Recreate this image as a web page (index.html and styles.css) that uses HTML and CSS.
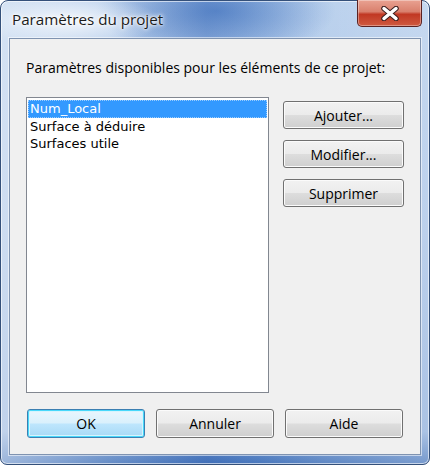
FILE: index.html
```html
<!DOCTYPE html>
<html lang="fr">
<head>
<meta charset="utf-8">
<title>Paramètres du projet</title>
<link rel="stylesheet" href="styles.css">
</head>
<body>
<div class="window">
  <div class="titlebar">
    <span class="title">Paramètres du projet</span>
    <div class="close">
      <svg width="24" height="15" viewBox="0 0 24 15" aria-hidden="true">
        <path d="M6 2.5 L18 12.5 M18 2.5 L6 12.5" stroke="#3a1e1e" stroke-width="5.5" stroke-linecap="round"/>
        <path d="M6 2.5 L18 12.5 M18 2.5 L6 12.5" stroke="#ffffff" stroke-width="3.5" stroke-linecap="round"/>
      </svg>
    </div>
  </div>
  <div class="client">
    <div class="label">Paramètres disponibles pour les éléments de ce projet:</div>
    <div class="main">
      <div class="listbox">
        <div class="item selected">Num_Local</div>
        <div class="item">Surface à déduire</div>
        <div class="item">Surfaces utile</div>
      </div>
      <div class="side">
        <button class="btn">Ajouter...</button>
        <button class="btn">Modifier...</button>
        <button class="btn">Supprimer</button>
      </div>
    </div>
    <div class="footer">
      <button class="btn wide default">OK</button>
      <button class="btn wide">Annuler</button>
      <button class="btn wide">Aide</button>
    </div>
  </div>
</div>
</body>
</html>
```
FILE: styles.css
```css
html, body {
  margin: 0;
  padding: 0;
  background: #ffffff;
}
body {
  width: 430px;
  height: 465px;
  overflow: hidden;
  font-family: "Open Sans", "DejaVu Sans", sans-serif;
}
.window {
  box-sizing: border-box;
  width: 430px;
  height: 465px;
  border: 1px solid #34507a;
  border-radius: 8px 8px 7px 7px;
  padding: 0 8px 9px 8px;
  background:
    radial-gradient(ellipse 90px 26px at 70px 20px, rgba(255,255,255,0.75), rgba(255,255,255,0) 100%),
    radial-gradient(ellipse 120px 45px at 215px 10px, rgba(40,95,180,0.55), rgba(40,95,180,0) 100%),
    linear-gradient(90deg, rgba(255,255,255,0.45) 0%, rgba(255,255,255,0.15) 25%, rgba(30,80,170,0.25) 48%, rgba(60,110,190,0.15) 60%, rgba(255,255,255,0.1) 75%, rgba(255,255,255,0.25) 100%),
    linear-gradient(180deg, #b3cceb 0%, #a6c1e6 50%, #8fafdc 93%, #4a78bc 100%);
  box-shadow: inset 0 0 0 1px rgba(255,255,255,0.6);
  display: flex;
  flex-direction: column;
}
.titlebar {
  height: 37px;
  display: flex;
  align-items: flex-start;
  flex-shrink: 0;
}
.title {
  margin-top: 8px;
  margin-left: 3px;
  font-family: "Open Sans", "DejaVu Sans", sans-serif;
  font-size: 15.2px;
  color: #1b1b1b;
  text-shadow: 0 0 6px #ffffff, 0 0 4px #ffffff, 0 0 2px #ffffff;
}
.close {
  margin-left: auto;
  margin-right: -1px;
  margin-top: -1px;
  width: 65px;
  height: 27px;
  box-sizing: border-box;
  border: 1px solid #5a2222;
  border-top: none;
  border-radius: 0 0 5px 5px;
  background: linear-gradient(180deg, #e9a292 0%, #d9806d 45%, #c13823 55%, #cf5a40 100%);
  box-shadow: inset 0 0 0 1px rgba(255,255,255,0.35);
  display: flex;
  align-items: center;
  justify-content: center;
}
.client {
  flex: 1;
  border: 1px solid #7f93b0;
  background: #f0f0f0;
  box-shadow: 0 0 0 1px rgba(255,255,255,0.55);
  display: flex;
  flex-direction: column;
  padding: 0 15px 0 16px;
}
.label {
  margin-top: 20px;
  height: 18px;
  line-height: 18px;
  font-size: 14px;
  color: #000;
  white-space: nowrap;
}
.main {
  margin-top: 20px;
  display: flex;
  align-items: flex-start;
}
.listbox {
  box-sizing: border-box;
  width: 243px;
  height: 296px;
  border: 1px solid #828790;
  background: #ffffff;
  padding: 2px 1px;
}
.item {
  height: 17.5px;
  line-height: 17.5px;
  padding-left: 2px;
  font-family: "DejaVu Sans", sans-serif;
  font-size: 13px;
  color: #000;
  white-space: nowrap;
}
.item.selected {
  background: #3399ff;
  color: #fff;
  outline: 1px dotted #99ccff;
  outline-offset: -1px;
}
.side {
  margin-left: 14px;
  margin-top: 4px;
  display: flex;
  flex-direction: column;
  gap: 11px;
}
.btn {
  box-sizing: border-box;
  width: 121px;
  height: 28px;
  border: 1px solid #707070;
  border-radius: 3px;
  background: linear-gradient(180deg, #f2f2f2 0%, #ebebeb 49%, #dddddd 51%, #cfcfcf 100%);
  box-shadow: inset 0 0 0 1px #fbfbfb;
  font-family: "Open Sans", "DejaVu Sans", sans-serif;
  font-size: 14px;
  color: #000;
  padding: 0;
  margin: 0;
}
.footer {
  margin-top: 16px;
  margin-left: 1px;
  display: flex;
  gap: 11px;
}
.btn.wide {
  width: 118px;
  height: 29px;
}
.btn.default {
  border-color: #3c7fb1;
  box-shadow: inset 0 0 0 1px #48d8fb, inset 0 0 0 2px #d6f4fd;
  background: linear-gradient(180deg, #eaf6fd 0%, #d9f0fc 49%, #bee6fd 51%, #a7d9f5 100%);
}
```
